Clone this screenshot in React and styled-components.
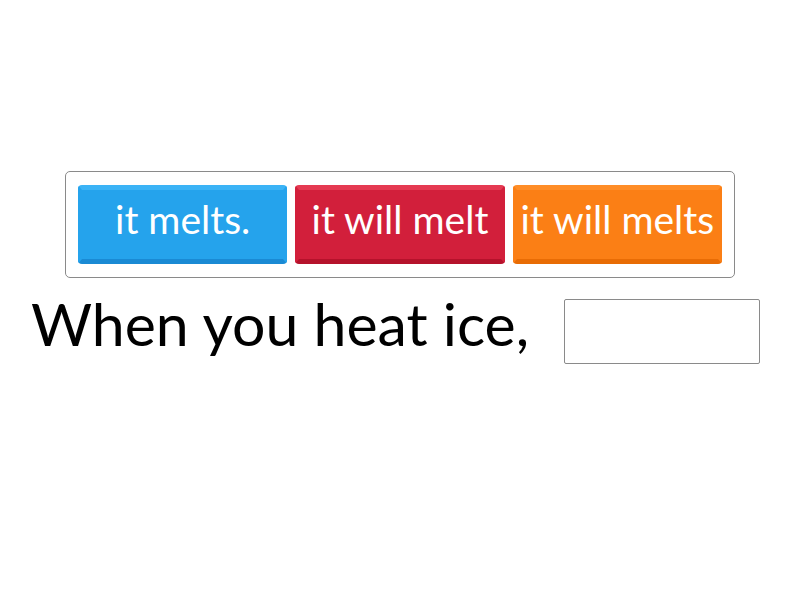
import React from 'react'
import styled, { createGlobalStyle } from 'styled-components'

const tiles = [
  { text: 'it melts.', base: '#25a3ec', light: '#3bb3f6', dark: '#1a8ad4' },
  { text: 'it will melt', base: '#d21f3b', light: '#e53a52', dark: '#b5122b' },
  { text: 'it will melts', base: '#fb7f15', light: '#ff8d27', dark: '#e86c05' }
]

export default function App () {
  return (
    <Page>
      <GlobalStyle />
      <TileTray>
        {tiles.map(t => (
          <Tile key={t.text} base={t.base} light={t.light} dark={t.dark}>
            {t.text}
          </Tile>
        ))}
      </TileTray>
      <Sentence>
        <Words>When you heat ice,</Words>
        <Blank />
      </Sentence>
    </Page>
  )
}

const GlobalStyle = createGlobalStyle`
  body {
    margin: 0;
    background: #fff;
    font-family: Lato, "Open Sans", sans-serif;
  }
`

const Page = styled.div`
  width: 800px;
  height: 600px;
  display: flex;
  flex-direction: column;
  padding-top: 171px;
  box-sizing: border-box;
`

const TileTray = styled.div`
  margin-left: 65px;
  width: 670px;
  height: 107px;
  box-sizing: border-box;
  border: 1px solid #8a8a8a;
  border-radius: 5px;
  display: flex;
  gap: 8px;
  padding: 13px 12px;
`

const Tile = styled.div`
  width: 210px;
  height: 79px;
  box-sizing: border-box;
  border-radius: 4px;
  background: ${p => p.base};
  border: 4px solid ${p => p.base};
  border-top: 5px solid ${p => p.light};
  border-bottom: 5px solid ${p => p.dark};
  color: #fff;
  font-size: 39px;
  display: flex;
  align-items: center;
  justify-content: center;
  white-space: nowrap;
  padding-bottom: 11px;
`

const Sentence = styled.div`
  display: flex;
  align-items: flex-start;
  margin-top: 11px;
  padding-left: 31px;
`

const Words = styled.span`
  font-size: 59px;
  color: #000;
  line-height: 1.2;
`

const Blank = styled.div`
  width: 196px;
  height: 65px;
  box-sizing: border-box;
  border: 1px solid #8a8a8a;
  border-radius: 2px;
  margin-top: 10px;
  margin-left: 35px;
`
